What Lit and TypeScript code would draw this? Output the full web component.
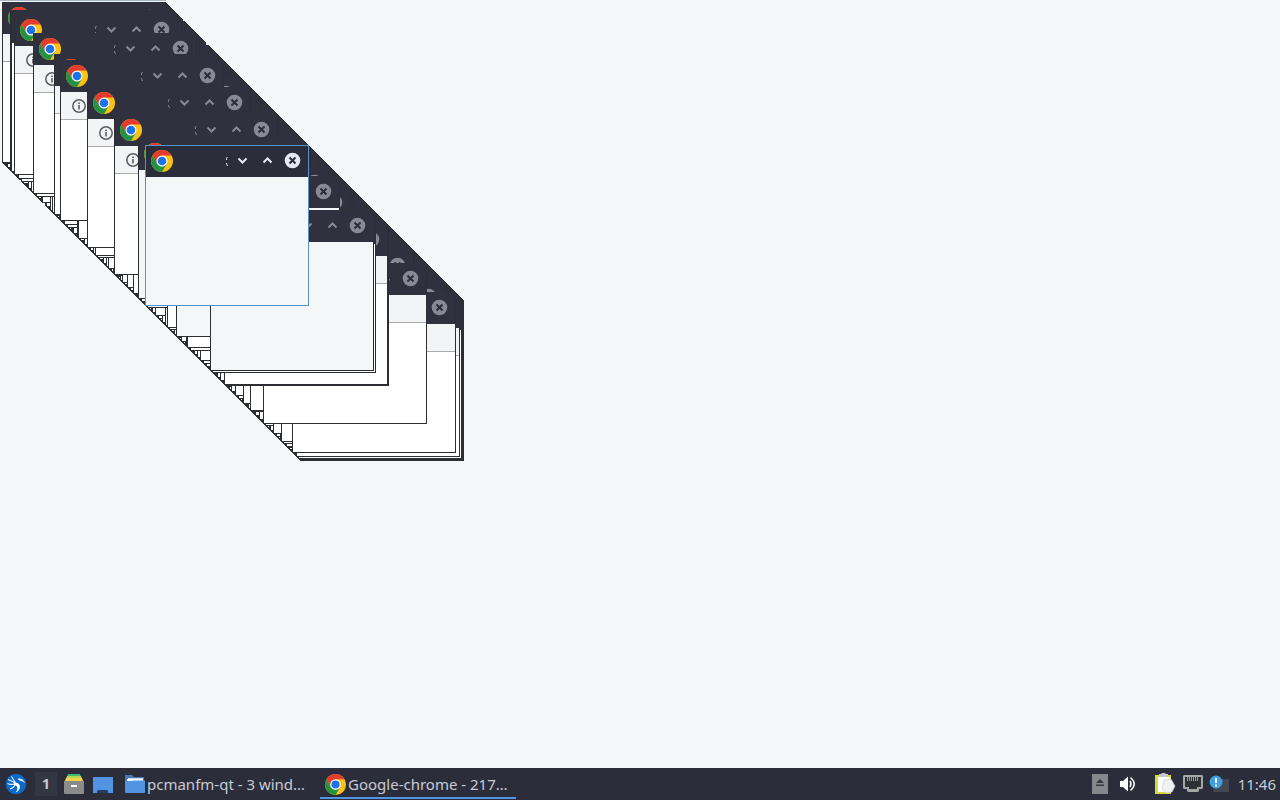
import { LitElement, html, css, svg, nothing } from "lit";
import { customElement, property } from "lit/decorators.js";

type Kind = "page" | "blank" | "plain";
interface Win { at: number; kind: Kind; chrome: boolean; active?: boolean }

const page = (at: number): Win => ({ at, kind: "page", chrome: true });
const blank = (at: number): Win => ({ at, kind: "blank", chrome: true });
const plain = (at: number): Win => ({ at, kind: "plain", chrome: false });

// Front-most window first.
const front: Win[] = [
  { ...blank(145), active: true },
  blank(138), page(114), page(87), page(60), page(54), page(33), page(14),
  plain(11), plain(10), blank(210), plain(212), page(224), plain(225),
  blank(176), page(263), page(292), page(296), plain(298), plain(299), plain(300),
  page(167), page(187), page(78), page(250), page(281), page(2),
  plain(147), plain(165), plain(155), plain(190), plain(200),
  plain(251), plain(243), plain(235), plain(273),
  plain(18), plain(21), plain(31), plain(28), plain(36), plain(52), plain(50),
  plain(77), plain(64), plain(67), plain(95), plain(97), plain(108), plain(106),
  plain(133), plain(127), plain(122), plain(220), plain(217),
];

const used = new Set(front.map((w) => w.at));
const missing = new Set([20, 43, 44]);
const shuffle = (n: number) => (n * 7919 + n * n * 131) % 997;
const rest: Win[] = [];
for (let i = 3; i < 300; i++) {
  if (!used.has(i) && !missing.has(i)) rest.push(plain(i));
}
rest.sort((a, b) => shuffle(a.at) - shuffle(b.at));
const stack = [...front, ...rest].reverse();

const chromeLogo = svg`
  <circle cx="12" cy="12" r="11" fill="#fbc116"/>
  <path d="M2.5 6.5A11 11 0 0 1 21.5 6.5L12 6.5L7.2 14.7Z" fill="#e33b2e"/>
  <path d="M2.5 6.5A11 11 0 0 0 12 23L16.8 14.8L12 17.5L7.2 14.8Z" fill="#229342"/>
  <circle cx="12" cy="12" r="5.5" fill="#fff"/>
  <circle cx="12" cy="12" r="4.3" fill="#1a73e8"/>`;

@customElement("desk-window")
export class DeskWindow extends LitElement {
  @property({ attribute: false }) win!: Win;

  static styles = css`
    :host { display: block; }
    .frame {
      box-sizing: border-box; width: 164px; height: 161px;
      display: flex; flex-direction: column;
      border: 1px solid #2d2e33; border-top-color: #2f323e; background: #fff;
    }
    .blank { background: #f4f7f8; }
    .active { border-color: #5294c8; }
    .title {
      box-sizing: border-box; flex: none; height: 31px; background: #2f323e; color: #878994;
      display: flex; align-items: center; padding: 0 3px 2px 4px;
    }
    .active .title { background: #2b2d3a; color: #e6e8f2; }
    .logo { width: 24px; height: 24px; flex: none; display: block; }
    .gap { flex: 1; }
    .dots { width: 4px; height: 12px; flex: none; margin-right: 1px; }
    .ctl {
      width: 25px; height: 25px; flex: none; border: 0; padding: 0; margin: 0;
      background: none; color: inherit; display: flex;
      align-items: center; justify-content: center;
    }
    .ctl svg { width: 17px; height: 17px; display: block; }
    .bar {
      flex: none; box-sizing: border-box; height: 28px; background: #f2f4f5;
      border-bottom: 1px solid #a8aaac; padding: 6px 0 0 10px;
    }
    .info { width: 16px; height: 16px; display: block; }
  `;

  render() {
    const { kind, chrome, active } = this.win;
    return html`<div class="frame ${kind} ${active ? "active" : ""}">
      <div class="title">
        ${chrome
          ? html`<svg class="logo" viewBox="0 0 24 24">${chromeLogo}</svg>
            <span class="gap"></span>
            <svg class="dots" viewBox="0 0 4 12"><path d="M2.5 2Q1 3 1.5 5M1.5 8Q1.5 9 2.5 11" fill="none" stroke="currentColor"/></svg>
            <button class="ctl" aria-label="Minimize"><svg viewBox="0 0 17 17"><path d="M4.5 6.5L8.5 10.5L12.5 6.5" fill="none" stroke="currentColor" stroke-width="2"/></svg></button>
            <button class="ctl" aria-label="Maximize"><svg viewBox="0 0 17 17"><path d="M4.5 10.5L8.5 6.5L12.5 10.5" fill="none" stroke="currentColor" stroke-width="2"/></svg></button>
            <button class="ctl" aria-label="Close"><svg viewBox="0 0 17 17"><circle cx="8.5" cy="8.5" r="7.8" fill="currentColor"/><path d="M5.5 5.5L11.5 11.5M11.5 5.5L5.5 11.5" stroke="#2b2d3a" stroke-width="2"/></svg></button>`
          : nothing}
      </div>
      ${kind === "page"
        ? html`<div class="bar"><svg class="info" viewBox="0 0 16 16"><circle cx="8" cy="8" r="6.2" fill="none" stroke="#5b5d60" stroke-width="1.5"/><path d="M8 7V11.5M8 4.5V6" stroke="#5b5d60" stroke-width="1.6"/></svg></div>`
        : nothing}
    </div>`;
  }
}

@customElement("app-root")
export class AppRoot extends LitElement {
  static styles = css`
    :host {
      display: flex; flex-direction: column; height: 100vh; overflow: hidden;
      background: #f4f7f8; font-family: "Noto Sans", sans-serif;
      font-size: 15px; line-height: 20px;
    }
    .desk { flex: 1; position: relative; overflow: hidden; }
    .edge { height: 1px; width: 166px; background: #a9b5c1; }
    .place { position: absolute; }
    .panel {
      flex: none; height: 32px; background: #2b2e3a; color: #c8cad6;
      display: flex; align-items: center; box-sizing: border-box; padding: 0 4px;
    }
    button { font: inherit; color: inherit; background: none; border: 0; padding: 0; margin: 0; }
    svg { display: block; flex: none; }
    .quick { display: flex; align-items: center; }
    .pad { width: 24px; height: 32px; display: flex; align-items: center; justify-content: center; }
    .space { width: 22px; height: 24px; margin: 0 5px 0 7px; background: #333643; font-weight: 700; font-size: 14px; }
    .files { margin-right: 5px; }
    .tasks { display: flex; flex: 1; min-width: 0; margin-left: 5px; gap: 4px; }
    .task {
      box-sizing: border-box; width: 196px; height: 30px; padding: 2px 4px 0 4px;
      display: flex; align-items: center; gap: 1px; border-bottom: 2px solid transparent;
      white-space: nowrap; text-align: left;
    }
    .task.on { border-bottom-color: #5294e2; }
    .tray { display: flex; align-items: center; gap: 4px; }
    .spacer { width: 5px; }
    .narrow { width: 20px; }
    .clock { margin-left: 5px; }
  `;

  render() {
    return html`
      <main class="desk">
        <div class="edge"></div>
        ${stack.map((w) => html`<desk-window class="place" style="left:${w.at}px;top:${w.at}px" .win=${w}></desk-window>`)}
      </main>
      <footer class="panel">
        <div class="quick">
          <button class="pad" aria-label="Menu"><svg width="22" height="22" viewBox="0 0 22 22"><circle cx="11" cy="11" r="10.3" fill="#0b69c8"/><path d="M6.5 3.5L10.5 10L3 6.5M2.5 10.5Q5.5 12 9.5 11M5 16Q8.5 15 10.5 11.5" fill="none" stroke="#e9f4ff" stroke-width="1.1"/><path d="M9 9.5Q14.5 9.5 15 13.5Q15 17.5 10.5 19.5Q13 16.5 12.3 14Q11.5 12 8.5 12ZM12.5 5.5Q18.5 5 20 10.5Q18.5 8 15.5 7.8Q13.5 7.5 12.5 5.5Z" fill="#fff"/></svg></button>
          <button class="pad space">1</button>
          <button class="pad files" aria-label="Files"><svg width="20" height="22" viewBox="0 0 20 22"><path d="M4 1H16L17 4H3Z" fill="#43b877"/><path d="M3 3H17L18 6H2Z" fill="#b9d653"/><path d="M2 5H18L19 8H1Z" fill="#f7d44b"/><path d="M0 8H20V20Q20 21 19 21H1Q0 21 0 20Z" fill="#8b8b8b"/><path d="M7 13H13" stroke="#fff" stroke-width="2"/></svg></button>
          <button class="pad" aria-label="Show desktop"><svg width="20" height="18" viewBox="0 0 20 18"><path d="M0 2H20V18H0Z" fill="#5294e2"/><path d="M4 18V16L5 15H14L15 16V18Z" fill="#273d63"/></svg></button>
        </div>
        <nav class="tasks">
          <button class="task"><svg width="22" height="20" viewBox="0 0 22 20"><path d="M1 1H8L10 3H20V17H1Z" fill="#4877b1"/><path d="M3 5H19V7H3Z" fill="#fff"/><path d="M1 18V7H8L9 6.5H21V18Q21 19 20 19H2Q1 19 1 18Z" fill="#5294e2"/><path d="M4 5H19" stroke="#fff" stroke-width="1.5"/></svg><span>pcmanfm-qt - 3 wind…</span></button>
          <button class="task on"><svg width="23" height="23" viewBox="0 0 24 24">${chromeLogo}</svg><span>Google-chrome - 217…</span></button>
        </nav>
        <div class="tray">
          <button class="pad" aria-label="Eject"><svg width="16" height="20" viewBox="0 0 16 20"><path d="M0 0H16V20H0Z" fill="#86878a"/><path d="M4 9L8 5L12 9ZM4 10.5H12V12H4Z" fill="#363944"/></svg></button>
          <button class="pad" aria-label="Volume"><svg width="18" height="18" viewBox="0 0 18 18"><path d="M1 6H4L9 1.5V16.5L4 12H1Z" fill="#fff"/><path d="M11 6Q13 9 11 12M11.5 2.5Q19 9 11.5 15.5" fill="none" stroke="#fff" stroke-width="1.5"/></svg></button>
          <span class="spacer"></span>
          <button class="pad" aria-label="Clipboard"><svg width="22" height="22" viewBox="0 0 22 22"><path d="M1 2H17V21H1Z" fill="#d7da3c"/><path d="M4 4H16V19H4Z" fill="#fff"/><path d="M5 1H7L8 0H11L12 1H14V4H5Z" fill="#c7c8cc"/><path d="M10 7L17 6L21 13L18 19L12 20L8 15Z" fill="#f0f1f2" stroke="#c5c6c8" stroke-width=".6"/></svg></button>
          <button class="pad" aria-label="Network"><svg width="20" height="18" viewBox="0 0 20 18"><path d="M1 0H19L20 1V13L19 14H16V16L15 17H5L4 16V14H1L0 13V1Z" fill="#a5a5a6"/><path d="M2 2H18V12H14V14H6V12H2Z" fill="#303135"/><path d="M4.5 2V6M6.5 2V6M8.5 2V6M10.5 2V6M12.5 2V6M14.5 2V6" stroke="#9c9c9e"/></svg></button>
          <button class="pad narrow" aria-label="Updates"><svg width="20" height="18" viewBox="0 0 20 18"><path d="M7 4H20V17H4Z" fill="#454853"/><circle cx="7" cy="7" r="6.5" fill="#3f9fe0"/><path d="M7 3V8M7 9.5V11.5" stroke="#fff" stroke-width="2"/></svg></button>
          <time class="clock">11:46</time>
        </div>
      </footer>`;
  }
}
